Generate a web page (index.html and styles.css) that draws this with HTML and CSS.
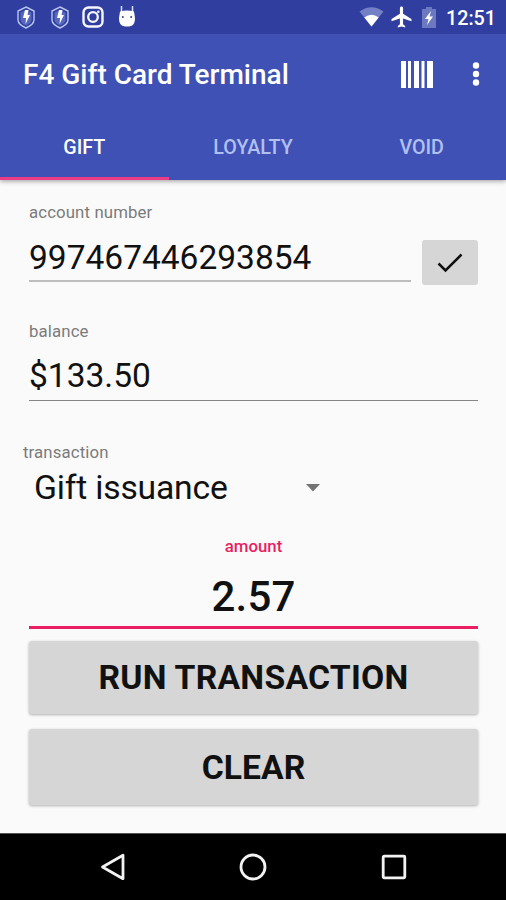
FILE: index.html
```html
<!DOCTYPE html>
<html lang="en">
<head>
<meta charset="utf-8">
<title>F4 Gift Card Terminal</title>
<link rel="stylesheet" href="styles.css">
</head>
<body>
<header class="header">
  <div class="status">
    <div class="notices">
      <svg width="18" height="23" viewBox="0 0 18 23"><path d="M9 1 17 5v9c0 4-4 6-8 8-4-2-8-4-8-8V5Z" fill="none" stroke="#b8c5f2" stroke-width="1.4"/><path d="M9 4 14.5 6.5v7c0 3-2.5 4.5-5.5 6-3-1.5-5.5-3-5.5-6v-7Z" fill="#5668bd"/><path d="M8 4h3.500l-1 5H13l-4.500 9 .5-6H6Z" fill="#fff"/></svg>
      <svg width="18" height="23" viewBox="0 0 18 23"><path d="M9 1 17 5v9c0 4-4 6-8 8-4-2-8-4-8-8V5Z" fill="none" stroke="#b8c5f2" stroke-width="1.4"/><path d="M9 4 14.5 6.5v7c0 3-2.5 4.5-5.5 6-3-1.5-5.5-3-5.5-6v-7Z" fill="#5668bd"/><path d="M8 4h3.500l-1 5H13l-4.500 9 .5-6H6Z" fill="#fff"/></svg>
      <svg width="22" height="22" viewBox="0 0 22 22" fill="none" stroke="#f4f6ff"><rect x="1.5" y="1.5" width="19" height="19" rx="5" stroke-width="2.4"/><circle cx="11" cy="11" r="4.8" stroke-width="2.3"/><circle cx="16.3" cy="5.7" r="1.3" fill="#f4f6ff" stroke="none"/></svg>
      <svg width="18" height="22" viewBox="0 0 18 22"><path d="M3.5 0v6M14.5 0v6" stroke="#dce3ff" stroke-width="1.5"/><path d="M2 5.500Q9 3.500 16 5.500l1 6.500c0 6-2 8.500-8 8.500S1 18 1 12Z" fill="#fff"/><circle cx="4.8" cy="11" r="1" fill="#303f9f"/><circle cx="13.2" cy="11" r="1" fill="#303f9f"/></svg>
    </div>
    <div class="system">
      <svg width="25" height="20" viewBox="0 0 25 20"><path d="M12.5 19.5 .5 4.500Q12.500-4 24.500 4.500Z" fill="#7480c5"/><path d="M12.5 19.5 5.300 10.500Q12.500 5 19.700 10.500Z" fill="#fff"/></svg>
      <svg class="plane" width="22" height="22" viewBox="2 1.5 20 21"><path fill="#fff" d="M21 16v-2l-8-5V3.500C13 2.670 12.330 2 11.500 2S10 2.670 10 3.500V9l-8 5v2l8-2.500V19l-2 1.500V22l3.500-1 3.500 1v-1.500L13 19v-5.500Z"/></svg>
      <svg class="battery" width="14" height="21" viewBox="0 0 14 21"><path d="M4 0h6v2h4v19H0V2h4Z" fill="#6c79c0"/><path d="M9 4 3 12h3.500L5 18l6-8.500H7.500Z" fill="#fff"/></svg>
      <span class="clock">12:51</span>
    </div>
  </div>
  <div class="toolbar">
    <h1 class="title">F4 Gift Card Terminal</h1>
    <svg class="barcode" width="32" height="27" viewBox="0 0 32 27"><path fill="#fff" d="M0 0h5v27H0ZM7 0h3v27H7ZM13 0h5v27H13ZM20.500 0h3v27H20.500ZM26 0h6v27H26Z"/></svg>
    <svg class="more" width="8" height="26" viewBox="0 0 8 26" fill="#fff"><circle cx="4" cy="4.5" r="3.2"/><circle cx="4" cy="13" r="3.2"/><circle cx="4" cy="21.5" r="3.2"/></svg>
  </div>
  <nav class="tabs">
    <span class="tab active">GIFT</span><span class="tab">LOYALTY</span><span class="tab">VOID</span>
  </nav>
</header>
<main class="content">
  <div class="account">
    <div class="field account-field">
      <span class="label">account number</span>
      <span class="value">997467446293854</span>
    </div>
    <div class="check"><svg width="26" height="20" viewBox="0 0 26 20"><path d="M1.500 10.500 8.500 17.500 24.500 1.500" fill="none" stroke="#111" stroke-width="2.5"/></svg></div>
  </div>
  <div class="field balance">
    <span class="label">balance</span>
    <span class="value">$133.50</span>
  </div>
  <div class="transaction">
    <span class="label">transaction</span>
    <div class="select"><span>Gift issuance</span><svg width="14" height="8" viewBox="0 0 14 8"><path d="M0 0h14L7 7.500Z" fill="#737373"/></svg></div>
  </div>
  <div class="field amount">
    <span class="label">amount</span>
    <span class="value">2.57</span>
  </div>
  <div class="button run"><span>RUN TRANSACTION</span></div>
  <div class="button clear"><span>CLEAR</span></div>
</main>
<footer class="nav">
  <svg width="26" height="28" viewBox="0 0 26 28"><path d="M2.500 14 23 2.300v23.400Z" fill="none" stroke="#f2f2f2" stroke-width="2.8" stroke-linejoin="round"/></svg>
  <svg width="28" height="28" viewBox="0 0 28 28"><circle cx="14" cy="14" r="12" fill="none" stroke="#f2f2f2" stroke-width="2.8"/></svg>
  <svg width="26" height="26" viewBox="0 0 26 26"><rect x="2.2" y="2.2" width="21.6" height="21.6" rx="1" fill="none" stroke="#f2f2f2" stroke-width="2.8"/></svg>
</footer>
</body>
</html>
```
FILE: styles.css
```css
* { box-sizing: border-box; }
body {
  margin: 0;
  width: 506px;
  height: 900px;
  display: flex;
  flex-direction: column;
  overflow: hidden;
  background: #fafafa;
  color: #111;
  font-family: Roboto, "Liberation Sans", sans-serif;
}
svg { display: block; flex: none; }
.header {
  height: 180px;
  flex: none;
  background: #3f51b5;
  color: #fff;
  box-shadow: 0 1px 5px rgba(0, 0, 0, .4);
}
.status {
  height: 34px;
  padding: 0 10px 0 17px;
  display: flex;
  align-items: center;
  justify-content: space-between;
  background: #303f9f;
}
.notices, .system { display: flex; align-items: center; }
.notices { gap: 16px; }
.notices svg:nth-child(3) { margin-left: -3px; }
.notices svg:nth-child(4) { margin-left: -2px; }
.system { gap: 8px; }
.plane { margin-left: -1px; }
.battery { margin-left: 1px; }
.clock { font-size: 19.7px; font-weight: 500; line-height: 34px; margin-left: 2px; padding-top: 3px; }
.toolbar {
  height: 80px;
  padding: 0 26px 0 23px;
  display: flex;
  align-items: center;
}
.title { margin: 0; font-size: 28px; font-weight: 500; flex: 1; line-height: 40px; padding-top: 2px; }
.more { margin-left: 39px; }
.tabs { display: flex; height: 66px; }
.tab {
  flex: 1;
  text-align: center;
  font-size: 19.7px;
  font-weight: 500;
  line-height: 68px;
  color: #b2c0f0;
}
.active { color: #fff; border-bottom: 3px solid #ec3c85; }
.content { flex: 1; padding: 20px 28px 0 29px; }
.account { display: flex; align-items: flex-start; justify-content: space-between; }
.field { display: flex; flex-direction: column; border-bottom: 1.5px solid #858585; }
.label { font-size: 16.8px; line-height: 24px; letter-spacing: .12px; color: #7b7b7b; }
.value { font-size: 33.5px; line-height: 40px; }
.account-field { width: 382px; height: 82px; border-bottom: 2px solid #bdbdbd; }
.account-field .value { margin-top: 14px; }
.balance .value { margin-top: 13px; }
.check {
  width: 56px;
  height: 45px;
  margin-top: 40px;
  border-radius: 3px;
  background: #d6d6d6;
  display: flex;
  align-items: center;
  justify-content: center;
}
.balance { margin-top: 34px; height: 82px; }
.transaction { margin: 39px 0 0 -6px; }
.transaction .label { display: block; }
.select { display: flex; align-items: center; padding-left: 11px; font-size: 33.7px; letter-spacing: -.2px; line-height: 40px; margin-top: 4px; }
.select span { width: 272px; }
.amount {
  margin-top: 26px;
  height: 95px;
  text-align: center;
  border-bottom: 3px solid #e91e63;
}
.amount .label { color: #e91e63; font-weight: 500; letter-spacing: 0; }
.amount .value { font-size: 42px; font-weight: 500; line-height: 48px; margin-top: 15px; letter-spacing: .2px; }
.button {
  display: flex;
  align-items: center;
  justify-content: center;
  border-radius: 3px;
  background: #d6d6d6;
  box-shadow: 0 1px 3px rgba(0, 0, 0, .3);
  font-size: 33.7px;
  font-weight: 700;
}
.run { margin-top: 12px; height: 73px; letter-spacing: .25px; }
.clear { margin-top: 15px; height: 76px; }
.nav {
  height: 67px;
  flex: none;
  background: #000;
  border-top: 1px solid #555;
  display: grid;
  grid-template-columns: 126px 141px 140px;
  justify-content: start;
  align-items: center;
  justify-items: end;
}
```
